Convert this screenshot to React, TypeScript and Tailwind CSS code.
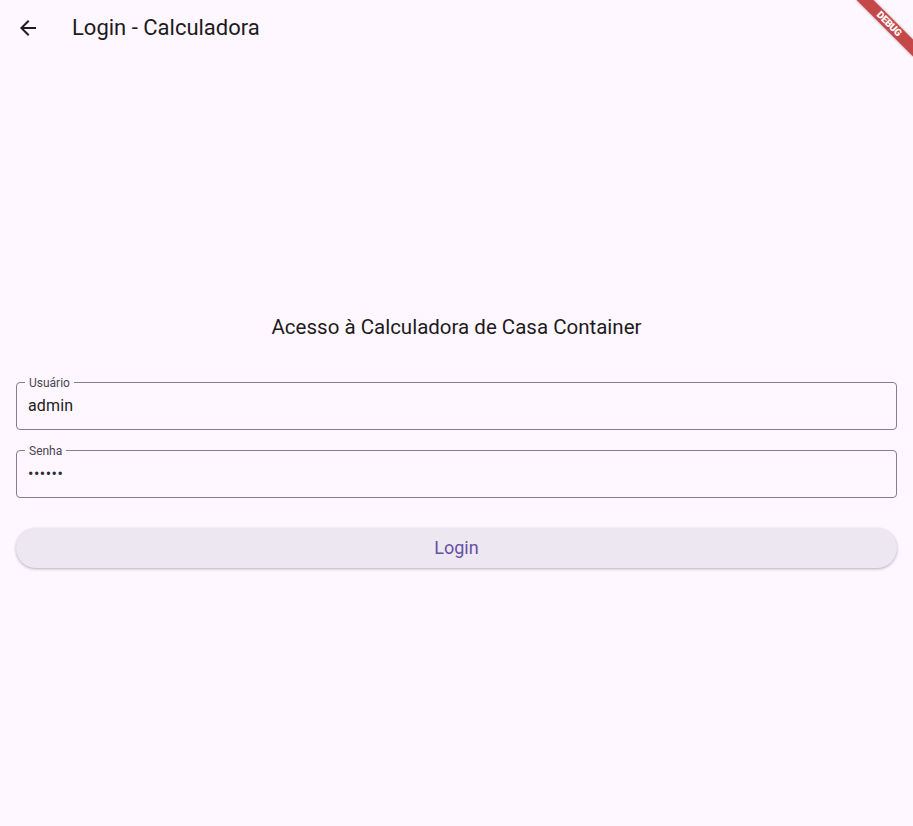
import React from "react";

function ArrowBack() {
  return (
    <svg width="24" height="24" viewBox="0 0 24 24" fill="#1d1b20">
      <path d="M20 11H7.83l5.59-5.59L12 4l-8 8 8 8 1.41-1.41L7.83 13H20v-2z" />
    </svg>
  );
}

function OutlinedField({ label, value, obscure }: { label: string; value: string; obscure?: boolean }) {
  return (
    <div className="relative h-[48px] rounded-[4px] border border-[#857f8a] px-[11px] flex items-center">
      <span className="absolute -top-[8px] left-[8px] bg-[#fef7ff] px-[4px] text-[12px] leading-[16px] text-[#49454f]">
        {label}
      </span>
      <span className={obscure ? "text-[16px] leading-[24px] tracking-[0.5px] text-[#2b2930]" : "text-[16px] leading-[24px] tracking-[0.15px] text-[#1d1b20]"}>
        {obscure ? "•".repeat(value.length) : value}
      </span>
    </div>
  );
}

export default function App() {
  return (
    <div className="relative flex h-[826px] w-full flex-col overflow-hidden bg-[#fef7ff] font-['Roboto',sans-serif]">
      <header className="flex h-14 shrink-0 items-center">
        <button className="ml-4 flex h-6 w-6 items-center justify-center">
          <ArrowBack />
        </button>
        <h1 className="ml-8 text-[22px] leading-[28px] text-[#1d1b20]">Login - Calculadora</h1>
      </header>

      <main className="flex flex-1 flex-col justify-center px-4">
        <h2 className="text-center text-[20.5px] leading-[24px] text-[#1d1b20]">
          Acesso à Calculadora de Casa Container
        </h2>
        <div className="mt-[43px] flex flex-col gap-5">
          <OutlinedField label="Usuário" value="admin" />
          <OutlinedField label="Senha" value="123456" obscure />
        </div>
        <button className="mt-[30px] h-10 w-full rounded-full bg-[#ede7f1] text-[18px] text-[#6750a4] shadow-[0_1px_3px_rgba(0,0,0,0.3)]">
          Login
        </button>
      </main>

      <div className="absolute left-[849px] top-[18px] flex h-[12px] w-[80px] rotate-45 items-center justify-center bg-[#b71c1c]/80 shadow-[0_0_3px_rgba(0,0,0,0.3)]">
        <span className="text-[10px] leading-none font-black tracking-tight text-white">DEBUG</span>
      </div>
    </div>
  );
}
